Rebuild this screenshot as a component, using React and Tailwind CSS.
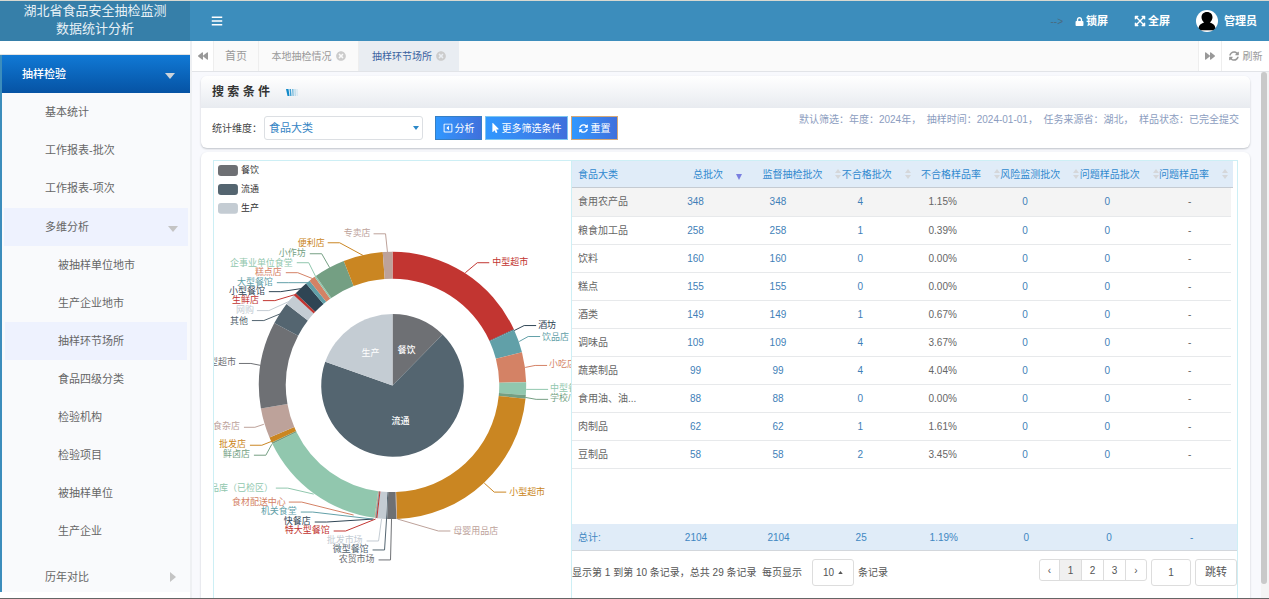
import React from "react";
import {
  FaBars,
  FaLock,
  FaExpandArrowsAlt,
  FaBackward,
  FaForward,
  FaSyncAlt,
  FaTimesCircle,
  FaMousePointer,
  FaRegCaretSquareLeft,
} from "react-icons/fa";

const CX = 178;
const CY = 224;

const ring = [
  [0, 65.2, "#c23531"],
  [65.2, 65.5, "#2f4554"],
  [65.5, 75.6, "#61a0a8"],
  [75.6, 88.6, "#d48265"],
  [88.6, 94.1, "#91c7ae"],
  [94.1, 95.7, "#749f83"],
  [95.7, 178.1, "#ca8622"],
  [178.1, 178.4, "#bda29a"],
  [178.4, 182.3, "#6e7074"],
  [182.3, 182.8, "#546570"],
  [182.8, 186.5, "#c4ccd3"],
  [186.5, 187, "#c23531"],
  [187, 187.2, "#2f4554"],
  [187.2, 187.4, "#61a0a8"],
  [187.4, 187.7, "#d48265"],
  [187.7, 244, "#91c7ae"],
  [244, 244.7, "#749f83"],
  [244.7, 247, "#ca8622"],
  [247, 260, "#bda29a"],
  [260, 297.8, "#6e7074"],
  [297.8, 307.5, "#546570"],
  [307.5, 312.4, "#c4ccd3"],
  [312.4, 313.6, "#c23531"],
  [313.6, 319.7, "#2f4554"],
  [319.7, 321.6, "#61a0a8"],
  [321.6, 324.3, "#d48265"],
  [324.3, 325, "#91c7ae"],
  [325, 338.6, "#749f83"],
  [338.6, 355.8, "#ca8622"],
  [355.8, 360, "#bda29a"],
];

const pie = [
  [0, 44.6, "#6e7074"],
  [44.6, 289.4, "#546570"],
  [289.4, 360, "#c4ccd3"],
];

const labels = [
  ["专卖店", "end", 156, 71, "#bda29a", "159,72 171,72 173,91"],
  ["便利店", "end", 110, 81, "#ca8622", "113,81 125,81 149,94"],
  ["小作坊", "end", 91, 91, "#749f83", "95,92 107,92 115,106"],
  ["企事业单位食堂", "end", 78, 101, "#91c7ae", "82,101 94,101 101,115"],
  ["糕点店", "end", 67, 110, "#d48265", "71,111 83,111 98,117"],
  ["大型餐馆", "end", 58, 120, "#61a0a8", "62,121 74,121 94,121"],
  ["小型餐馆", "end", 50, 129, "#2f4554", "54,130 66,130 86,127"],
  ["生鲜店", "end", 44, 138, "#c23531", "48,139 60,139 80,133"],
  ["网购", "end", 39, 148, "#c4ccd3", "42,149 54,149 76,139"],
  ["其他", "end", 33, 159, "#546570", "37,159 49,159 66,152"],
  ["大型超市", "end", 21, 201, "#6e7074", "24,202 36,202 46,204"],
  ["食杂店", "end", 25, 265, "#bda29a", "29,266 40,266 49,263"],
  ["批发店", "end", 31, 283, "#ca8622", "35,284 47,284 57,280"],
  ["鲜卤店", "end", 35, 293, "#749f83", "39,294 51,294 57,283"],
  ["成品库（已检区）", "end", 58, 327, "#91c7ae", "61,327 73,327 99,333"],
  ["食材配送中心", "end", 71, 341, "#d48265", "74,341 87,341 139,354"],
  ["机关食堂", "end", 82, 350, "#61a0a8", "86,351 98,351 158,358"],
  ["快餐店", "end", 96, 360, "#2f4554", "100,361 112,361 159,358"],
  ["特大型餐馆", "end", 115, 369, "#c23531", "119,370 131,370 161,358"],
  ["批发市场", "end", 148, 379, "#c4ccd3", "152,380 164,380 167,358"],
  ["微型餐馆", "end", 154, 388, "#546570", "158,389 170,389 172,358"],
  ["农贸市场", "end", 160, 398, "#6e7074", "164,399 176,399 177,358"],
  ["中型超市", "start", 278, 100, "#c23531", "251,111 263,101 275,101"],
  ["酒坊", "start", 324, 163, "#2f4554", "300,169 310,164 322,164"],
  ["饮品店", "start", 328, 175, "#61a0a8", "305,180 314,175 326,175"],
  ["小吃店", "start", 335, 203, "#d48265", "311,206 321,204 333,204"],
  ["中型餐", "start", 336, 227, "#91c7ae", "312,228 334,228"],
  ["学校/食", "start", 336, 237, "#749f83", "311,236 322,238 334,238"],
  ["小型超市", "start", 295, 331, "#ca8622", "270,322 280,331 292,331"],
  ["母婴用品店", "start", 239, 370, "#bda29a", "183,358 224,370 236,370"],
];

const legend = [
  ["餐饮", "#6e7074"],
  ["流通", "#546570"],
  ["生产", "#c4ccd3"],
];

function point(angle, r) {
  const a = (angle * Math.PI) / 180;
  return `${CX + r * Math.sin(a)} ${CY - r * Math.cos(a)}`;
}

function sector(start, end, inner, outer) {
  const large = end - start > 180 ? 1 : 0;
  return (
    `M${point(start, outer)}A${outer} ${outer} 0 ${large} 1 ${point(end, outer)}` +
    `L${point(end, inner)}` +
    (inner ? `A${inner} ${inner} 0 ${large} 0 ${point(start, inner)}` : "") +
    "Z"
  );
}

function Chart() {
  return (
    <svg viewBox="0 0 358 437" className="block w-full text-[9px]" role="img" aria-label="抽样环节场所">
      {legend.map(([name, color], i) => (
        <g key={name}>
          <rect x="4" y={4 + i * 19} width="20" height="11" rx="3" fill={color} />
          <text x="27" y={9 + i * 19} dominantBaseline="central" fill="#333">{name}</text>
        </g>
      ))}
      <g transform="translate(1 1)">
        {ring.map(([a, b, color]) => (
          <path key={a} d={sector(a, b, 107, 134)} fill={color} />
        ))}
        {pie.map(([a, b, color]) => (
          <path key={a} d={sector(a, b, 0, 71.5)} fill={color} />
        ))}
        {labels.map(([name, anchor, x, y, color, line]) => (
          <g key={name}>
            <polyline points={line} fill="none" stroke={color} />
            <text x={x} y={y} textAnchor={anchor} dominantBaseline="central" fill={color}>{name}</text>
          </g>
        ))}
        <g fill="#fff" textAnchor="middle" dominantBaseline="central">
          <text x="192" y="189" className="font-medium">餐饮</text>
          <text x="156" y="192">生产</text>
          <text x="186" y="260" className="font-medium">流通</text>
        </g>
      </g>
    </svg>
  );
}

const headers = [
  ["食品大类", "w-[18%]", ""],
  ["总批次", "w-[10.5%]", "desc"],
  ["监督抽检批次", "w-[12%]", "both"],
  ["不合格批次", "w-[12%]", "both"],
  ["不合格样品率", "w-[12%]", "both"],
  ["风险监测批次", "w-[12%]", "both"],
  ["问题样品批次", "w-[12%]", "both"],
  ["问题样品率", "w-[11.5%]", "both"],
];

const rows = [
  ["食用农产品", "348", "348", "4", "1.15%", "0", "0", "-"],
  ["粮食加工品", "258", "258", "1", "0.39%", "0", "0", "-"],
  ["饮料", "160", "160", "0", "0.00%", "0", "0", "-"],
  ["糕点", "155", "155", "0", "0.00%", "0", "0", "-"],
  ["酒类", "149", "149", "1", "0.67%", "0", "0", "-"],
  ["调味品", "109", "109", "4", "3.67%", "0", "0", "-"],
  ["蔬菜制品", "99", "99", "4", "4.04%", "0", "0", "-"],
  ["食用油、油...", "88", "88", "0", "0.00%", "0", "0", "-"],
  ["肉制品", "62", "62", "1", "1.61%", "0", "0", "-"],
  ["豆制品", "58", "58", "2", "3.45%", "0", "0", "-"],
];

const totals = ["总计:", "2104", "2104", "25", "1.19%", "0", "0", "-"];

function SortMark({ kind }) {
  if (kind === "desc") {
    return (
      <svg viewBox="0 0 8 12" className="h-3 w-2 shrink-0">
        <path d="M1 6h6l-3 6z" fill="#7a7fe0" />
      </svg>
    );
  }
  return (
    <svg viewBox="0 0 8 12" className="h-3 w-2 shrink-0">
      <path d="M1 5h6L4 1zM1 7h6l-3 4z" fill="#d5d7da" />
    </svg>
  );
}

function DataTable() {
  return (
    <div>
      <div className="mr-1 border-b border-[#c5cbd2] bg-[#e0ecf8]">
        <table className="w-full table-fixed">
          <thead>
            <tr className="h-[26px] text-[#3089cf]">
              {headers.map(([name, width, sort]) => (
                <th key={name} className={width + " p-0 text-left font-normal"}>
                  {sort ? (
                    <span className="flex items-center whitespace-nowrap pl-0.5">
                      <span>{name}</span>
                      <span className="ml-3 flex">
                        <SortMark kind={sort} />
                      </span>
                    </span>
                  ) : (
                    <span className="pl-1.5">{name}</span>
                  )}
                </th>
              ))}
            </tr>
          </thead>
        </table>
      </div>
      <div className="min-h-84 pr-1.5">
        <table className="w-full table-fixed">
          <tbody>
            {rows.map((row, r) => (
              <tr key={row[0]} className={"h-7 border-b border-[#e7e9eb] " + (r === 0 ? "bg-[#f4f4f4]" : "")}>
                {row.map((cell, c) => (
                  <td
                    key={c}
                    className={
                      "p-0 " +
                      (c === 0
                        ? "pl-1.5 text-left text-[#666]"
                        : c === 4 || c === 7
                          ? "text-center text-[#666]"
                          : "text-center text-[#3f7fb8]")
                    }
                  >
                    {c > 0 && c !== 4 && c !== 7 ? <a href="#detail">{cell}</a> : cell}
                  </td>
                ))}
              </tr>
            ))}
          </tbody>
        </table>
      </div>
      <div className="border-b border-[#d3d7dc] bg-[#e0ecf8] pr-1">
        <table className="w-full table-fixed">
          <tbody>
            <tr className="h-[26px] text-[#3f87c2]">
              {totals.map((cell, c) => (
                <td key={c} className={"p-0 " + (c === 0 ? "pl-1.5 text-left" : "text-center")}>
                  {cell}
                </td>
              ))}
            </tr>
          </tbody>
        </table>
      </div>
    </div>
  );
}

function Pagination() {
  return (
    <div className="mt-2 flex items-start justify-between text-[#555]">
      <div className="flex items-center gap-1">
        <span className="mr-1.5">显示第 1 到第 10 条记录，总共 29 条记录&nbsp; 每页显示</span>
        <button type="button" className="flex h-[27px] w-[42px] items-center justify-center gap-1 rounded-[3px] border border-[#ddd]">
          10
          <svg viewBox="0 0 6 4" className="h-[3px] w-[5px]"><path d="M0 4h6L3 0z" fill="#555" /></svg>
        </button>
        <span>条记录</span>
      </div>
      <div className="flex items-start gap-1">
        <nav aria-label="分页" className="flex divide-x divide-[#ddd] overflow-hidden rounded-[3px] border border-[#ddd]">
          <a href="#prev" className="flex h-5 w-5 items-center justify-center">‹</a>
          <a href="#1" className="flex h-5 w-[22px] items-center justify-center bg-[#f0f0f0]">1</a>
          <a href="#2" className="flex h-5 w-[22px] items-center justify-center">2</a>
          <a href="#3" className="flex h-5 w-[22px] items-center justify-center">3</a>
          <a href="#next" className="flex h-5 w-5 items-center justify-center">›</a>
        </nav>
        <input aria-label="页码" defaultValue="1" className="h-[27px] w-10 rounded-[3px] border border-[#ddd] text-center" />
        <button type="button" className="h-[27px] w-[42px] rounded-[3px] border border-[#ddd] text-[11px]">跳转</button>
      </div>
    </div>
  );
}

const subMenu = ["被抽样单位地市", "生产企业地市", "抽样环节场所", "食品四级分类", "检验机构", "检验项目", "被抽样单位", "生产企业"];

function CaretDown({ className }) {
  return (
    <svg viewBox="0 0 10 6" className={"mt-1 h-[6px] w-[10px] " + className}>
      <path d="M0 0h10L5 6z" fill="currentColor" />
    </svg>
  );
}

function Sidebar() {
  return (
    <aside className="flex w-[190px] shrink-0 flex-col">
      <h1 className="flex h-10 shrink-0 flex-col items-center bg-[#367fa9] pt-px text-[13px] leading-[18px] text-[#e8f1f6]">
        <span>湖北省食品安全抽检监测</span>
        <span>数据统计分析</span>
      </h1>
      <div className="h-3.5 shrink-0 border-b border-[#e3e3e3] bg-white" />
      <nav className="mb-1.5 min-h-0 flex-1 overflow-hidden border-l-2 border-[#3c8dbc] bg-[#f9fafc] text-[11px] text-[#666]">
        <a href="#sampling" className="flex h-[38px] items-center justify-between bg-linear-to-b from-[#1179d5] to-[#0653a4] pl-5 pr-[15px] font-medium text-white">
          抽样检验
          <CaretDown className="text-[#ccd3da]" />
        </a>
        <a href="#basic" className="flex h-[38px] items-center pl-[43px]">基本统计</a>
        <a href="#batch" className="flex h-[38px] items-center pl-[43px]">工作报表-批次</a>
        <a href="#item" className="flex h-[38px] items-center pl-[43px]">工作报表-项次</a>
        <a href="#multi" className="mx-0.5 mt-px flex h-[38px] items-center justify-between bg-[#eef2fe] pl-[41px] pr-2.5">
          多维分析
          <CaretDown className="text-[#c4c4c4]" />
        </a>
        {subMenu.map((name, i) => (
          <a
            key={name}
            href={"#sub" + i}
            className={"mx-[3px] flex h-[38px] items-center pl-[53px] " + (i === 2 ? "bg-[#eef2fe]" : "")}
          >
            {name}
          </a>
        ))}
        <a href="#history" className="mt-2 flex h-[38px] items-center justify-between pl-[43px] pr-3.5">
          历年对比
          <svg viewBox="0 0 6 10" className="h-2.5 w-1.5"><path d="M0 0v10l6-5z" fill="#c4c4c4" /></svg>
        </a>
      </nav>
    </aside>
  );
}

function TopBar() {
  return (
    <header className="flex h-10 shrink-0 items-center justify-between bg-[#3c8dbc] pl-[21px] pr-3 text-[11px] font-bold text-white">
      <button type="button" aria-label="切换菜单"><FaBars className="h-3 w-3" /></button>
      <div className="flex items-center">
        <span className="mr-3 text-[10px] font-normal text-[#4a6b80]">--&gt;</span>
        <a href="#lock" className="mr-[26px] flex items-center gap-0.5"><FaLock className="h-[9px] w-[9px]" />锁屏</a>
        <a href="#full" className="mr-[26px] flex items-center gap-0.5"><FaExpandArrowsAlt className="h-3 w-3" />全屏</a>
        <a href="#user" className="flex items-center gap-1.5">
          <svg viewBox="0 0 22 22" className="h-[22px] w-[22px]">
            <circle cx="11" cy="11" r="11" fill="#fff" />
            <path d="M11 2c-3.600 0-5.500 2.300-5.500 5.200 0 2.200 1.200 4.200 2.700 5.300C5.800 13.300 3 14.500 2.600 18.200c1.200 1.300 1.800 1.700 2.400 2h12c.6-.3 1.200-.7 2.400-2-.4-3.700-3.200-4.900-5.600-5.700 1.500-1.100 2.700-3.100 2.700-5.300C16.500 4.300 14.600 2 11 2z" fill="#000" />
          </svg>
          管理员
        </a>
      </div>
    </header>
  );
}

function TabBar() {
  return (
    <div className="flex h-[31px] shrink-0 items-stretch border-b border-[#e2e4e8] bg-[#fafafa] text-[10px] text-[#999]">
      <button type="button" aria-label="向左" className="flex w-[22px] items-center justify-center border-r border-[#eee] bg-white"><FaBackward className="h-2.5 w-2.5" /></button>
      <a href="#home" className="flex w-[45px] items-center justify-center border-r border-[#eee] text-[11px]">首页</a>
      <a href="#local" className="flex w-[100px] items-center justify-center gap-1 border-r border-[#eee]">本地抽检情况<FaTimesCircle className="h-2.5 w-2.5 text-[#ccc]" /></a>
      <a href="#place" className="flex w-[100px] items-center justify-center gap-1 bg-[#e9edf2] text-[#3a62a0]">抽样环节场所<FaTimesCircle className="h-2.5 w-2.5 text-[#ccc]" /></a>
      <div className="flex-1" />
      <button type="button" aria-label="向右" className="flex w-6 items-center justify-center border-x border-[#eee] bg-white"><FaForward className="h-2.5 w-2.5" /></button>
      <button type="button" className="flex w-[47px] items-center justify-center gap-1 bg-white text-[10px]"><FaSyncAlt className="h-2.5 w-2.5" />刷新</button>
    </div>
  );
}

function SearchCard() {
  return (
    <section className="shrink-0 overflow-hidden rounded-md bg-white shadow-[0_1px_2px_#bfc3c9]">
      <h2 className="flex h-8 items-center bg-linear-to-b from-white to-[#e8ebf0] pl-[11px] text-[12px] font-bold text-[#333]">
        搜 索 条 件
        <svg viewBox="0 0 12 7" className="ml-4 h-[7px] w-3">
          <path d="M0 0h2.500l1 7H1.500z" fill="#1089c9" />
          <path d="M3.500 0h1.500l.5 7H4.200z" fill="#3f9fd2" />
          <path d="M6 0h1.500l.2 7H6.500z" fill="#74b9dc" />
          <path d="M8.500 0h1l.2 7h-1z" fill="#a3d0e6" />
          <path d="M10.500 0h1l.2 7h-1z" fill="#cbe3f0" />
        </svg>
      </h2>
      <div className="flex h-10 items-start justify-between pl-[11px] pr-[11px] pt-2">
        <div className="flex items-center">
          <label htmlFor="dim" className="w-[52px] whitespace-nowrap text-[10px] text-[#444]">统计维度：</label>
          <div className="relative mr-3">
            <select id="dim" className="block h-6 w-[159px] appearance-none rounded-[3px] border border-[#dcdfe3] bg-white pl-1 text-[11px] text-[#3584c4]">
              <option>食品大类</option>
            </select>
            <svg viewBox="0 0 6 4" className="pointer-events-none absolute right-1 top-2.5 h-1 w-1.5"><path d="M0 0h6L3 4z" fill="#2b88c8" /></svg>
          </div>
          <div className="flex gap-[3px] text-[10px] text-white">
            <button type="button" className="flex h-6 w-[47px] items-center justify-center gap-0.5 border border-[#367fc4] bg-linear-to-r from-[#2f98ff] to-[#3f70dc]"><FaRegCaretSquareLeft className="h-2.5 w-2.5" />分析</button>
            <button type="button" className="flex h-6 w-[83px] items-center justify-center gap-[3px] border border-[#7cc6f0] bg-linear-to-r from-[#2f98ff] to-[#3f70dc]"><FaMousePointer className="h-2.5 w-[7px]" />更多筛选条件</button>
            <button type="button" className="flex h-6 w-[47px] items-center justify-center gap-[3px] border border-[#d3a878] bg-linear-to-r from-[#2f98ff] to-[#3f70dc]"><FaSyncAlt className="h-[9px] w-[9px]" />重置</button>
          </div>
        </div>
        <p className="whitespace-pre text-[10px] leading-[7px] text-[#8c9dc0]">默认筛选：年度：2024年，  抽样时间：2024-01-01，  任务来源省：湖北，  样品状态：已完全提交</p>
      </div>
    </section>
  );
}

export default function App() {
  return (
    <div className="flex h-screen overflow-hidden border-b border-t border-b-[#666] border-t-[#d8d8d0] bg-white font-['Liberation_Sans','Noto_Sans_CJK_SC',sans-serif]">
      <Sidebar />
      <div className="flex min-w-0 flex-1 flex-col">
        <TopBar />
        <div className="flex min-h-0 flex-1 flex-col border-l-2 border-[#eef0f3]">
          <TabBar />
          <main className="flex min-h-0 flex-1 bg-[#f8f9fd]">
            <div className="flex min-w-0 flex-1 flex-col gap-1 pl-[9px] pr-[11px] pt-1">
              <SearchCard />
              <section className="min-h-0 flex-1 overflow-hidden rounded-t-md bg-white px-3 pt-2 shadow-[0_1px_2px_#bfc3c9]">
                <div className="flex h-full border border-b-0 border-[#cdeff5]">
                  <div className="w-[35%] shrink-0 overflow-hidden border-r border-[#cdeff5]">
                    <Chart />
                  </div>
                  <div className="min-w-0 flex-1 text-[10px]">
                    <DataTable />
                    <Pagination />
                  </div>
                </div>
              </section>
            </div>
            <div className="w-2 bg-[#f4f4f4] pb-3.5">
              <div className="h-full w-1.5 rounded-full bg-[#c9c9c9]" />
            </div>
          </main>
        </div>
      </div>
    </div>
  );
}
